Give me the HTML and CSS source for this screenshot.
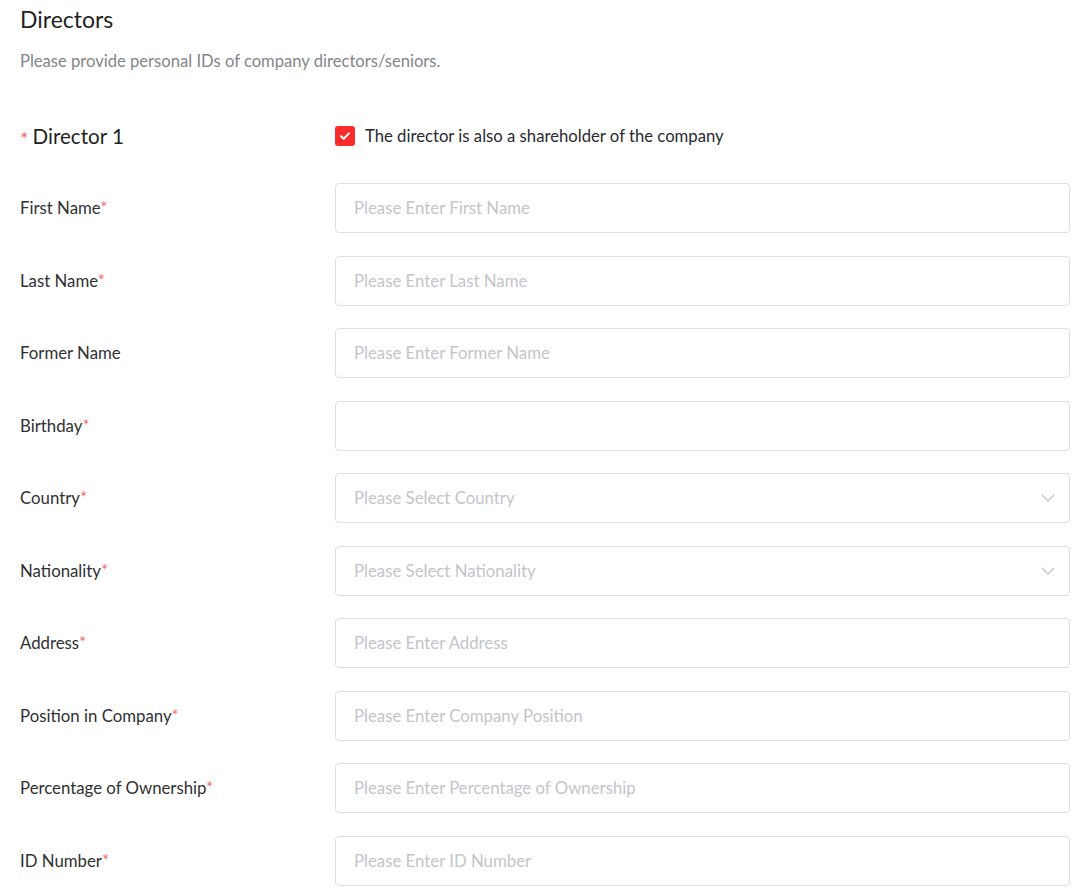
FILE: index.html
```html
<!DOCTYPE html>
<html>
<head>
<meta charset="utf-8">
<link rel="stylesheet" href="styles.css">
</head>
<body>
<div class="page">
  <h1 class="title">Directors</h1>
  <p class="subtitle">Please provide personal IDs of company directors/seniors.</p>

  <div class="director-head">
    <div class="director-name"><span class="req-pre">*</span>Director 1</div>
    <label class="check">
      <span class="box"><svg viewBox="0 0 20 20" width="20" height="20"><path d="M6 10.2l2.7 2.6L14 7.4" fill="none" stroke="#fff" stroke-width="2" stroke-linecap="round" stroke-linejoin="round"/></svg></span>
      <span class="check-text">The director is also a shareholder of the company</span>
    </label>
  </div>

  <div class="form">
    <div class="row"><div class="label">First Name<span class="req">*</span></div><div class="field"><span class="ph">Please Enter First Name</span></div></div>
    <div class="row"><div class="label">Last Name<span class="req">*</span></div><div class="field"><span class="ph">Please Enter Last Name</span></div></div>
    <div class="row"><div class="label">Former Name</div><div class="field"><span class="ph">Please Enter Former Name</span></div></div>
    <div class="row"><div class="label">Birthday<span class="req">*</span></div><div class="field"></div></div>
    <div class="row"><div class="label">Country<span class="req">*</span></div><div class="field select"><span class="ph">Please Select Country</span><svg class="chev" viewBox="0 0 14 8" width="14" height="8"><path d="M1 1l6 6 6-6" fill="none" stroke="#c0c4cc" stroke-width="1.3"/></svg></div></div>
    <div class="row"><div class="label">Nationality<span class="req">*</span></div><div class="field select"><span class="ph">Please Select Nationality</span><svg class="chev" viewBox="0 0 14 8" width="14" height="8"><path d="M1 1l6 6 6-6" fill="none" stroke="#c0c4cc" stroke-width="1.3"/></svg></div></div>
    <div class="row"><div class="label">Address<span class="req">*</span></div><div class="field"><span class="ph">Please Enter Address</span></div></div>
    <div class="row"><div class="label">Position in Company<span class="req">*</span></div><div class="field"><span class="ph">Please Enter Company Position</span></div></div>
    <div class="row"><div class="label">Percentage of Ownership<span class="req">*</span></div><div class="field"><span class="ph">Please Enter Percentage of Ownership</span></div></div>
    <div class="row"><div class="label">ID Number<span class="req">*</span></div><div class="field"><span class="ph">Please Enter ID Number</span></div></div>
  </div>
</div>
</body>
</html>
```

FILE: styles.css
```css
* { box-sizing: border-box; }
html, body { margin: 0; padding: 0; background: #fff; }
body { font-family: Lato, "Noto Sans", sans-serif; color: #303133; }
.page { padding: 0 16px 0 20px; }
.title { margin: 0; font-size: 23px; font-weight: 400; line-height: 38px; color: #1f1f24; }
.subtitle { margin: 12px 0 0; font-size: 16.6px; line-height: 22px; color: #85868a; }
.director-head { display: flex; align-items: center; height: 40px; margin-top: 44px; }
.director-name { width: 315px; font-size: 20.6px; color: #1f1f24; display: flex; align-items: center; }
.req-pre { color: #f56c6c; font-size: 20px; margin-right: 4px; position: relative; top: 2px; }
.check { display: flex; align-items: center; gap: 10px; }
.box { width: 20px; height: 20px; border-radius: 3px; background: #fb2c2c; display: flex; }
.check-text { font-size: 16.7px; color: #2a2a30; }
.form { margin-top: 27px; display: flex; flex-direction: column; gap: 22.5px; }
.row { display: flex; align-items: center; height: 50px; }
.label { width: 315px; font-size: 16.8px; color: #303133; line-height: 20px; }
.req { color: #f56c6c; }
.field { flex: 1; height: 50px; border: 1px solid #dcdfe6; border-radius: 4px; display: flex; align-items: center; padding: 0 14px 0 18px; }
.ph { flex: 1; font-size: 16.8px; color: #c3c5cb; line-height: 20px; }
.chev { flex: none; }
```
